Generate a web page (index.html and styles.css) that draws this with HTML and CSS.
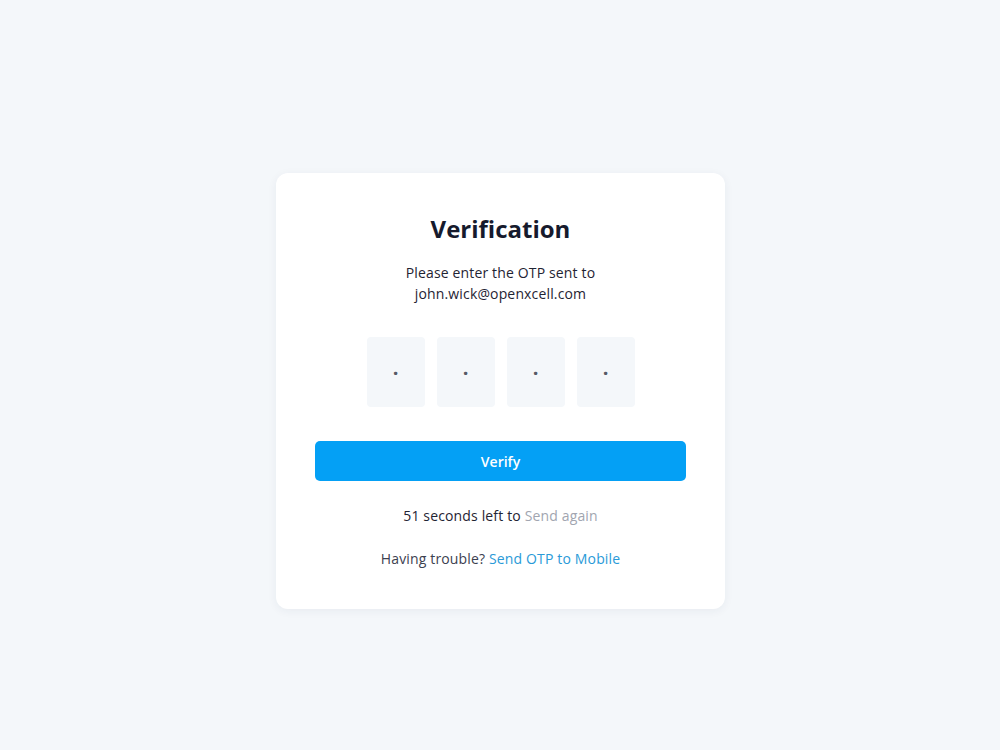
FILE: index.html
```html
<!DOCTYPE html>
<html lang="en">
<head>
<meta charset="utf-8">
<title>Verification</title>
<link rel="stylesheet" href="styles.css">
</head>
<body>
<main class="page">
  <section class="card">
    <h1 class="title">Verification</h1>
    <p class="subtitle">Please enter the OTP sent to<br>john.wick@openxcell.com</p>
    <div class="otp">
      <input class="otp-box" type="text" maxlength="1" placeholder="·">
      <input class="otp-box" type="text" maxlength="1" placeholder="·">
      <input class="otp-box" type="text" maxlength="1" placeholder="·">
      <input class="otp-box" type="text" maxlength="1" placeholder="·">
    </div>
    <button class="verify" type="button">Verify</button>
    <p class="timer">51 seconds left to <span class="resend">Send again</span></p>
    <p class="trouble">Having trouble? <a class="link" href="#">Send OTP to Mobile</a></p>
  </section>
</main>
</body>
</html>
```
FILE: styles.css
```css
* { box-sizing: border-box; }
html, body { margin: 0; height: 100%; }
body {
  background: #f4f7fa;
  font-family: "Open Sans", "Liberation Sans", sans-serif;
  color: #1f2433;
}
.page {
  height: 750px;
  display: flex;
  align-items: flex-start;
  justify-content: center;
  padding-top: 173px;
  padding-left: 1px;
}
.card {
  width: 449px;
  background: #ffffff;
  border-radius: 12px;
  box-shadow: 0 2px 10px rgba(30, 50, 80, 0.06);
  padding: 38px 39px 40px;
  display: flex;
  flex-direction: column;
  align-items: center;
}
.title {
  margin: 0;
  font-size: 24px;
  line-height: 36px;
  font-weight: 700;
  color: #161a2d;
}
.subtitle {
  margin: 15px 0 0;
  font-size: 14px;
  line-height: 21px;
  letter-spacing: 0.15px;
  text-align: center;
  color: #1f2433;
}
.otp {
  margin-top: 33px;
  display: flex;
  gap: 12px;
}
.otp-box {
  width: 58px;
  height: 70px;
  border: 0;
  border-radius: 4px;
  background: #f4f7fa;
  text-align: center;
  font-family: inherit;
  font-size: 20px;
  color: #1f2433;
  outline: none;
  padding: 0;
}
.otp-box::placeholder { color: #555a66; font-weight: 700; }
.verify {
  margin-top: 34px;
  width: 100%;
  height: 40px;
  border: 0;
  border-radius: 5px;
  background: #04a0f5;
  color: #ffffff;
  font-family: inherit;
  font-size: 14px;
  font-weight: 600;
  padding: 0;
}
.timer {
  margin: 24px 0 0;
  font-size: 14px;
  line-height: 21px;
  letter-spacing: 0.15px;
  color: #1f2433;
}
.resend { color: #a1a5b0; }
.trouble {
  margin: 22px 0 0;
  font-size: 14px;
  line-height: 21px;
  letter-spacing: 0.15px;
  color: #3c4150;
}
.link { color: #2a9ad8; text-decoration: none; }
```
